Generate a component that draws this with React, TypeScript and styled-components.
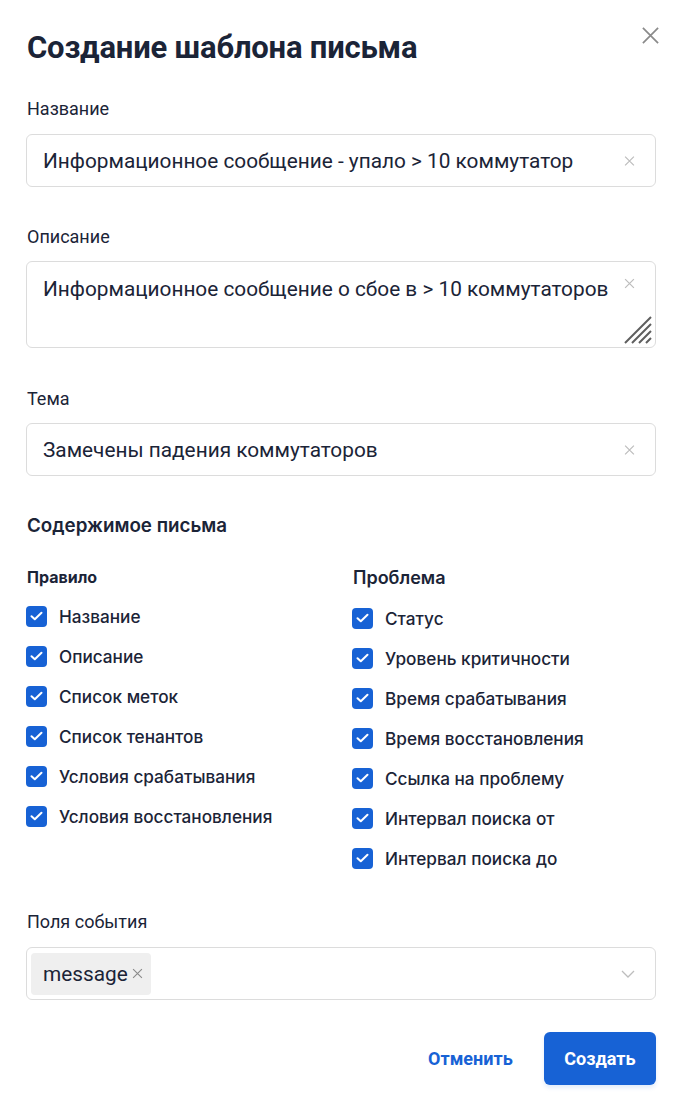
import styled, { createGlobalStyle } from "styled-components";

const GlobalStyle = createGlobalStyle`
  html, body {
    margin: 0;
    padding: 0;
    background: #fff;
  }
  * {
    box-sizing: border-box;
  }
`;

const ink = "#1b2437";
const blue = "#1762d5";

const Modal = styled.div`
  position: relative;
  width: 677px;
  padding: 30px 21px 19px 26px;
  font-family: Roboto, "Liberation Sans", sans-serif;
  color: ${ink};
`;

const Title = styled.h1`
  margin: 0 0 0 1px;
  font-size: 31px;
  line-height: 36px;
  font-weight: 700;
  letter-spacing: -0.2px;
`;

const CloseButton = styled.button`
  position: absolute;
  top: 23px;
  right: 15px;
  width: 24px;
  height: 24px;
  padding: 0;
  border: 0;
  background: none;
  display: flex;
  align-items: center;
  justify-content: center;
  cursor: pointer;
`;

const Field = styled.div<{ $top: number; $gap?: number }>`
  display: flex;
  flex-direction: column;
  gap: ${p => p.$gap ?? 12}px;
  margin-top: ${p => p.$top}px;
`;

const Label = styled.label`
  margin-left: 1px;
  font-size: 18px;
  line-height: 24px;
`;

const Box = styled.div<{ $height: number }>`
  position: relative;
  height: ${p => p.$height}px;
  border: 1px solid #dcdcdc;
  border-radius: 6px;
  background: #fff;
  display: flex;
  align-items: ${p => (p.$height > 60 ? "flex-start" : "center")};
`;

const TextInput = styled.input`
  flex: 1;
  min-width: 0;
  height: 100%;
  padding: 0 40px 0 16px;
  border: 0;
  border-radius: 6px;
  background: transparent;
  font-family: inherit;
  font-size: 20.8px;
  color: ${ink};
  outline: none;
`;

const TextArea = styled.textarea`
  flex: 1;
  height: 100%;
  padding: 15px 40px 0 16px;
  border: 0;
  border-radius: 6px;
  background: transparent;
  font-family: inherit;
  font-size: 20.8px;
  line-height: 24px;
  color: ${ink};
  resize: none;
  outline: none;
  overflow: hidden;
`;

const ClearIcon = styled.span<{ $top?: number }>`
  position: absolute;
  right: 20px;
  top: ${p => (p.$top !== undefined ? `${p.$top}px` : "50%")};
  transform: ${p => (p.$top !== undefined ? "none" : "translateY(-50%)")};
  display: flex;
`;

const ResizeGrip = styled.span`
  position: absolute;
  right: 2px;
  bottom: 2px;
  display: flex;
`;

const Section = styled.h2`
  margin: 38px 0 0 1px;
  font-family: Inter, "Noto Sans", sans-serif;
  font-size: 18.8px;
  line-height: 24px;
  font-weight: 600;
`;

const Columns = styled.div`
  display: grid;
  grid-template-columns: 326px 1fr;
  margin-top: 27px;
`;

const Column = styled.div`
  display: flex;
  flex-direction: column;
  gap: 16px;
`;

const ColumnTitle = styled.h3<{ $large?: boolean }>`
  margin: 0 0 -1px 1px;
  font-family: Inter, "Noto Sans", sans-serif;
  font-size: ${p => (p.$large ? 18 : 16)}px;
  line-height: ${p => (p.$large ? 26 : 24)}px;
  font-weight: ${p => (p.$large ? 600 : 700)};
`;

const CheckRow = styled.label`
  display: flex;
  align-items: center;
  gap: 12px;
  height: 24px;
  font-family: Inter, "Noto Sans", sans-serif;
  font-size: 17.2px;
  font-weight: 500;
  color: ${ink};
`;

const CheckBox = styled.span`
  width: 21px;
  height: 21px;
  border-radius: 4px;
  background: ${blue};
  display: flex;
  align-items: center;
  justify-content: center;
  flex-shrink: 0;
`;

const Tag = styled.span`
  display: inline-flex;
  align-items: center;
  gap: 4px;
  height: 42px;
  margin-left: 4px;
  padding: 0 8px 0 12px;
  border-radius: 4px;
  background: #efefef;
  font-size: 20.8px;
  color: ${ink};
`;

const Chevron = styled.span`
  position: absolute;
  right: 20px;
  top: 50%;
  transform: translateY(-50%);
  display: flex;
`;

const Footer = styled.div`
  display: flex;
  justify-content: flex-end;
  align-items: center;
  gap: 14px;
  margin-top: 32px;
`;

const Button = styled.button<{ $primary?: boolean }>`
  height: 53px;
  padding: 0 ${p => (p.$primary ? 20.5 : 17)}px;
  border: 0;
  border-radius: 6px;
  background: ${p => (p.$primary ? blue : "transparent")};
  color: ${p => (p.$primary ? "#fff" : blue)};
  box-shadow: ${p => (p.$primary ? "0 3px 4px rgba(23, 98, 213, 0.12)" : "none")};
  font-family: Roboto, "Liberation Sans", sans-serif;
  font-size: 18px;
  font-weight: 700;
  cursor: pointer;
`;

const Cross = ({ size, color, width }: { size: number; color: string; width: number }) => (
  <svg width={size} height={size} viewBox="0 0 10 10">
    <path d="M1 1L9 9M9 1L1 9" stroke={color} strokeWidth={width} fill="none" />
  </svg>
);

const Tick = () => (
  <svg width="13" height="10" viewBox="0 0 13 10">
    <path d="M1.5 5.2L4.8 8.3L11.5 1.7" stroke="#fff" strokeWidth="2" fill="none" strokeLinecap="round" strokeLinejoin="round" />
  </svg>
);

const ruleFields = [
  "Название",
  "Описание",
  "Список меток",
  "Список тенантов",
  "Условия срабатывания",
  "Условия восстановления",
];

const problemFields = [
  "Статус",
  "Уровень критичности",
  "Время срабатывания",
  "Время восстановления",
  "Ссылка на проблему",
  "Интервал поиска от",
  "Интервал поиска до",
];

export default function App() {
  return (
    <>
      <GlobalStyle />
      <Modal>
        <CloseButton aria-label="Закрыть">
          <Cross size={19} color="#8a8a8a" width={0.9} />
        </CloseButton>

        <Title>Создание шаблона письма</Title>

        <Field $top={31} $gap={13}>
          <Label>Название</Label>
          <Box $height={53}>
            <TextInput defaultValue="Информационное сообщение - упало > 10 коммутатор" />
            <ClearIcon>
              <Cross size={11} color="#bdbdbd" width={1.1} />
            </ClearIcon>
          </Box>
        </Field>

        <Field $top={38}>
          <Label>Описание</Label>
          <Box $height={87}>
            <TextArea defaultValue="Информационное сообщение о сбое в > 10 коммутаторов" />
            <ClearIcon $top={16}>
              <Cross size={11} color="#bdbdbd" width={1.1} />
            </ClearIcon>
            <ResizeGrip>
              <svg width="30" height="30" viewBox="0 0 30 30">
                <path d="M2 28L28 2M9 28L28 9M16 28L28 16M23 28L28 23" stroke="#5f5f5f" strokeWidth="2" fill="none" />
              </svg>
            </ResizeGrip>
          </Box>
        </Field>

        <Field $top={39}>
          <Label>Тема</Label>
          <Box $height={53}>
            <TextInput defaultValue="Замечены падения коммутаторов" />
            <ClearIcon>
              <Cross size={11} color="#bdbdbd" width={1.1} />
            </ClearIcon>
          </Box>
        </Field>

        <Section>Содержимое письма</Section>

        <Columns>
          <Column>
            <ColumnTitle>Правило</ColumnTitle>
            {ruleFields.map(name => (
              <CheckRow key={name}>
                <CheckBox>
                  <Tick />
                </CheckBox>
                {name}
              </CheckRow>
            ))}
          </Column>
          <Column>
            <ColumnTitle $large>Проблема</ColumnTitle>
            {problemFields.map(name => (
              <CheckRow key={name}>
                <CheckBox>
                  <Tick />
                </CheckBox>
                {name}
              </CheckRow>
            ))}
          </Column>
        </Columns>

        <Field $top={40} $gap={13}>
          <Label>Поля события</Label>
          <Box $height={53}>
            <Tag>
              message
              <Cross size={11} color="#8a8a8a" width={1} />
            </Tag>
            <Chevron>
              <svg width="14" height="8" viewBox="0 0 14 8">
                <path d="M1 1L7 7L13 1" stroke="#bdbdbd" strokeWidth="1.3" fill="none" />
              </svg>
            </Chevron>
          </Box>
        </Field>

        <Footer>
          <Button>Отменить</Button>
          <Button $primary>Создать</Button>
        </Footer>
      </Modal>
    </>
  );
}
